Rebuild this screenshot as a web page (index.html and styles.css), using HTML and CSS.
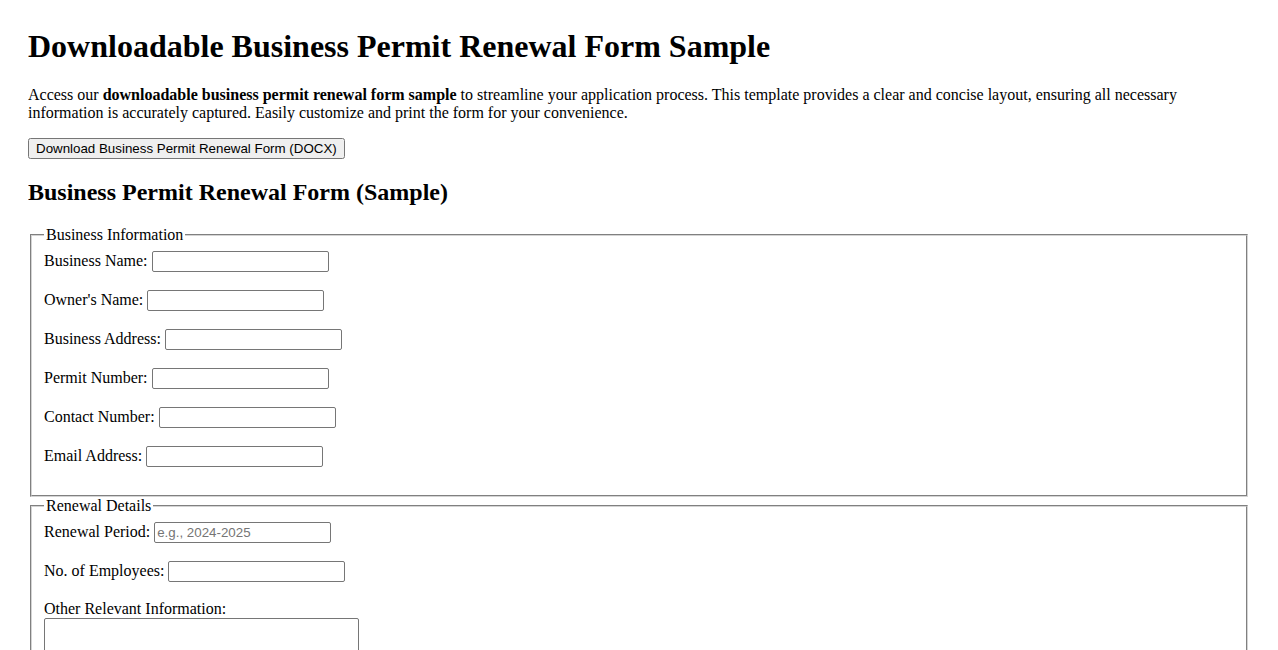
FILE: index.html
```html
<!DOCTYPE html>
<html lang="en">
<head>
<meta charset="utf-8">
<title>Downloadable Business Permit Renewal Form Sample</title>
<link rel="stylesheet" href="styles.css">
</head>
<body>
<h1>Downloadable Business Permit Renewal Form Sample</h1>
<p>Access our <strong>downloadable business permit renewal form sample</strong> to streamline your application process. This template provides a clear and concise layout, ensuring all necessary information is accurately captured. Easily customize and print the form for your convenience.</p>
<button class="download" type="button">Download Business Permit Renewal Form (DOCX)</button>
<h2>Business Permit Renewal Form (Sample)</h2>
<form>
  <fieldset>
    <legend>Business Information</legend>
    <div class="field"><label for="bn">Business Name:</label> <input id="bn" type="text"></div>
    <div class="field"><label for="on">Owner's Name:</label> <input id="on" type="text"></div>
    <div class="field"><label for="ba">Business Address:</label> <input id="ba" type="text"></div>
    <div class="field"><label for="pn">Permit Number:</label> <input id="pn" type="text"></div>
    <div class="field"><label for="cn">Contact Number:</label> <input id="cn" type="text"></div>
    <div class="field"><label for="ea">Email Address:</label> <input id="ea" type="email"></div>
  </fieldset>
  <fieldset>
    <legend>Renewal Details</legend>
    <div class="field"><label for="rp">Renewal Period:</label> <input id="rp" type="text" placeholder="e.g., 2024-2025"></div>
    <div class="field"><label for="ne">No. of Employees:</label> <input id="ne" type="number"></div>
    <div class="field"><label for="oi">Other Relevant Information:</label><br><textarea id="oi" rows="4"></textarea></div>
  </fieldset>
</form>
</body>
</html>
```
FILE: styles.css
```css
body {
  margin: 28px;
  font-family: "Liberation Serif", "Times New Roman", serif;
  font-size: 16px;
  color: #000;
  background: #fff;
}
h1 {
  font-size: 32px;
  margin: 0 0 21px;
}
p {
  margin: 0 0 16px;
}
.download {
  font-family: "Liberation Sans", Arial, sans-serif;
  font-size: 13.33px;
}
h2 {
  font-size: 24px;
  margin: 20px 0 20px;
}
fieldset {
  margin: 0 2px;
  padding: 7px 12px 10px;
  border: 2px groove #d4d4d4;
}
legend {
  padding: 0 2px;
}
.field {
  margin-bottom: 18px;
}
input, textarea {
  font-family: "Liberation Sans", Arial, sans-serif;
  font-size: 13.33px;
  border: 1px solid #767676;
  border-radius: 2px;
  width: 177px;
  box-sizing: border-box;
  height: 21px;
  padding: 1px 2px;
}
input::placeholder {
  color: #757575;
}
textarea {
  width: 315px;
  height: 60px;
  vertical-align: top;
}
```
